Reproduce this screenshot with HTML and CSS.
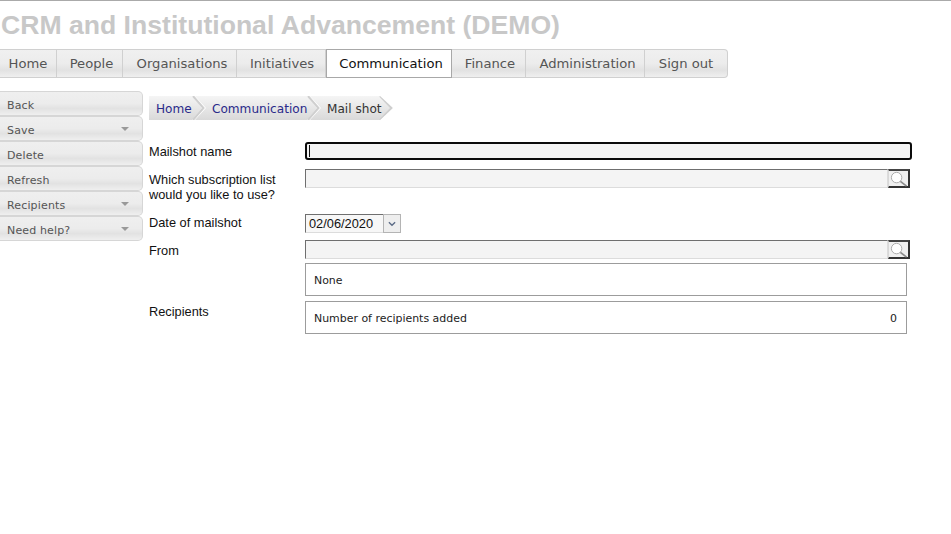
FILE: index.html
```html
<!DOCTYPE html>
<html lang="en">
<head>
<meta charset="utf-8">
<title>CRM and Institutional Advancement (DEMO)</title>
<link rel="stylesheet" href="styles.css">
</head>
<body>
<header class="top">
  <h1 class="title">CRM and Institutional Advancement (DEMO)</h1>
  <nav class="nav">
    <a class="nav-item w-home">Home</a>
    <a class="nav-item w-people">People</a>
    <a class="nav-item w-org">Organisations</a>
    <a class="nav-item w-init">Initiatives</a>
    <a class="nav-item nav-active w-comm">Communication</a>
    <a class="nav-item w-fin">Finance</a>
    <a class="nav-item w-admin">Administration</a>
    <a class="nav-item nav-last w-sign">Sign out</a>
  </nav>
</header>
<div class="main">
  <aside class="side">
    <a class="side-btn">Back</a>
    <a class="side-btn">Save<span class="caret"></span></a>
    <a class="side-btn">Delete</a>
    <a class="side-btn">Refresh</a>
    <a class="side-btn">Recipients<span class="caret"></span></a>
    <a class="side-btn">Need help?<span class="caret"></span></a>
  </aside>
  <section class="content">
    <div class="crumbs">
      <a class="crumb crumb-link">Home<svg class="chev" viewBox="0 0 14 24" aria-hidden="true"><path d="M0 0 L3 0 L14 12 L3 24 L0 24 L10 12 Z" fill="#fff"/><path d="M1 0 L11.5 12 L1 24" fill="none" stroke="#cfcfcf" stroke-width="2"/></svg></a>
      <a class="crumb crumb-link w-c2">Communication<svg class="chev" viewBox="0 0 14 24" aria-hidden="true"><path d="M0 0 L3 0 L14 12 L3 24 L0 24 L10 12 Z" fill="#fff"/><path d="M1 0 L11.5 12 L1 24" fill="none" stroke="#cfcfcf" stroke-width="2"/></svg></a>
      <a class="crumb crumb-cur">Mail shot<svg class="chev chev-end" viewBox="0 0 14 24" aria-hidden="true"><path d="M1 0 L12.5 12 L1 24" fill="none" stroke="#cfcfcf" stroke-width="2"/></svg></a>
    </div>
    <form class="form">
      <div class="row r-name">
        <label class="label">Mailshot name</label>
        <div class="field focus"><span class="cursor"></span></div>
      </div>
      <div class="row r-list">
        <label class="label">Which subscription list<br>would you like to use?</label>
        <div class="lookup"><div class="field"></div><button type="button" class="search"><svg viewBox="0 0 20 16" width="20" height="16" aria-hidden="true"><circle cx="8" cy="6.5" r="5.5" fill="#fff" stroke="#a9a9a9" stroke-width="1"/><path d="M12 10.5 L18.5 15.5" stroke="#8c8c8c" stroke-width="1.8"/></svg></button></div>
      </div>
      <div class="row r-date">
        <label class="label">Date of mailshot</label>
        <div class="date"><span class="date-text">02/06/2020</span><span class="date-btn"><svg viewBox="0 0 9 6" width="8" height="6" aria-hidden="true"><path d="M1 1 L4.5 4.5 L8 1" fill="none" stroke="#5a6a85" stroke-width="1.5"/></svg></span></div>
      </div>
      <div class="row r-from">
        <label class="label">From</label>
        <div class="lookup"><div class="field"></div><button type="button" class="search"><svg viewBox="0 0 20 16" width="20" height="16" aria-hidden="true"><circle cx="8" cy="6.5" r="5.5" fill="#fff" stroke="#a9a9a9" stroke-width="1"/><path d="M12 10.5 L18.5 15.5" stroke="#8c8c8c" stroke-width="1.8"/></svg></button></div>
      </div>
      <div class="row r-none">
        <span class="label"></span>
        <div class="box">None</div>
      </div>
      <div class="row r-rec">
        <label class="label">Recipients</label>
        <div class="box"><span>Number of recipients added</span><span>0</span></div>
      </div>
    </form>
  </section>
</div>
</body>
</html>
```

FILE: styles.css
```css
* { box-sizing: border-box; }
html, body { margin: 0; padding: 0; background: #fff; }
body { height: 534px; overflow: hidden; border-top: 1px solid #aaa; font-family: "Liberation Sans", Arial, sans-serif; color: #111; }

.top { display: block; }
.title { margin: 0; padding: 9px 0 0 1px; height: 48px; font-size: 26.6px; line-height: 30px; font-weight: 700; color: #c8c8c8; white-space: nowrap; }

.nav { display: flex; width: 728px; height: 29px; font-family: "DejaVu Sans", Verdana, sans-serif; font-size: 13.15px; }
.nav-item { display: flex; align-items: center; justify-content: center; height: 29px; color: #555; border: 1px solid #d0d0d0; border-left: 0; background: linear-gradient(#f0f0f0 0%, #ececec 50%, #e2e2e2 75%, #efefef 100%); white-space: nowrap; }
.nav-active { color: #111; background: #fff; border: 1px solid #a8a8a8; }
.nav-last { border-radius: 0 4px 4px 0; }
.w-home { width: 57px; }
.w-people { width: 66px; padding-left: 4px; }
.w-org { width: 114px; padding-left: 5px; }
.w-init { width: 89px; padding-left: 2px; }
.w-comm { width: 126px; padding-left: 4px; }
.w-fin { width: 74px; padding-left: 3px; }
.w-admin { width: 119px; padding-left: 5px; }
.w-sign { width: 83px; }

.main { display: flex; align-items: flex-start; padding-top: 13px; }
.side { width: 143px; flex: none; display: flex; flex-direction: column; font-family: "DejaVu Sans", Verdana, sans-serif; font-size: 11px; }
.side-btn { display: flex; align-items: center; justify-content: space-between; height: 25px; padding: 3px 12px 0 7px; color: #555; letter-spacing: 0.15px; border: 1px solid #d6d6d6; border-left: 0; border-radius: 0 5px 5px 0; background: linear-gradient(#efefef 0%, #ececec 50%, #e2e2e2 72%, #efefef 100%); }
.caret { width: 0; height: 0; border-left: 4px solid transparent; border-right: 4px solid transparent; border-top: 4px solid #999; margin: -3px 1px 0 0; }

.content { margin-left: 6px; flex: 1; padding-top: 5px; }
.crumbs { display: flex; height: 24px; width: 244px; background: linear-gradient(#f5f5f5, #d9d9d9); clip-path: polygon(0 0, 231px 0, 244px 12px, 231px 24px, 0 24px); font-family: "DejaVu Sans", Verdana, sans-serif; font-size: 12.1px; }
.crumb { position: relative; display: flex; align-items: center; padding: 1px 0 0 7px; height: 24px; white-space: nowrap; }
.crumb-link { color: #2a2a8a; width: 56px; }
.w-c2 { width: 115px; }
.crumb-cur { color: #333; width: 73px; padding-left: 7px; }
.chev { position: absolute; right: -1px; top: 0; width: 14px; height: 24px; }
.chev-end { right: 0; }

.form { display: block; width: 762px; }
.row { display: flex; align-items: flex-start; }
.label { flex: none; width: 156px; font-size: 12.8px; line-height: 15px; color: #111; }
.r-name { margin-top: 22px; }
.r-name .label { padding-top: 2px; }
.r-list { margin-top: 9px; height: 36px; }
.r-list .label { padding-top: 3px; }
.r-date { margin-top: 9px; }
.r-date .label { padding-top: 1px; }
.r-from { margin-top: 7px; }
.r-from .label { padding-top: 3px; }
.r-none { margin-top: 4px; }
.r-rec { margin-top: 5px; }
.r-rec .label { padding-top: 3px; }

.field { flex: 1; height: 19px; background: #f4f4f4; border: 1px solid #dcdcdc; border-top-color: #6f6f6f; border-left-color: #6f6f6f; }
.focus { position: relative; flex: none; width: 607px; height: 18px; border: 2px solid #0b0b0b; border-radius: 3px; }
.cursor { position: absolute; left: 2px; top: 1px; width: 1px; height: 12px; background: #111; }
.lookup { display: flex; width: 605px; height: 19px; }
.search { flex: none; width: 22px; height: 19px; padding: 0; display: flex; align-items: center; justify-content: center; background: #f0f0f0; border-style: solid; border-width: 2px 2px 2px 1px; border-color: #444 #333 #333 #d8d8d8; }

.date { display: flex; align-items: center; height: 19px; width: 96px; font-size: 12.8px; }
.date-text { flex: none; width: 78px; height: 19px; padding: 1px 0 0 3px; line-height: 15px; background: #f7f7f7; border: 1px solid #dcdcdc; border-top-color: #6f6f6f; border-left-color: #6f6f6f; border-right: 0; }
.date-btn { flex: none; width: 18px; height: 19px; display: flex; align-items: center; justify-content: center; background: #eeeeee; border: 1px solid #b4b4b4; }

.box { flex: none; width: 602px; height: 33px; display: flex; align-items: center; justify-content: space-between; padding: 1px 9px 0 8px; border: 1px solid #9c9c9c; background: #fff; color: #222; font-family: "DejaVu Sans", Verdana, sans-serif; font-size: 10.95px; }
```
